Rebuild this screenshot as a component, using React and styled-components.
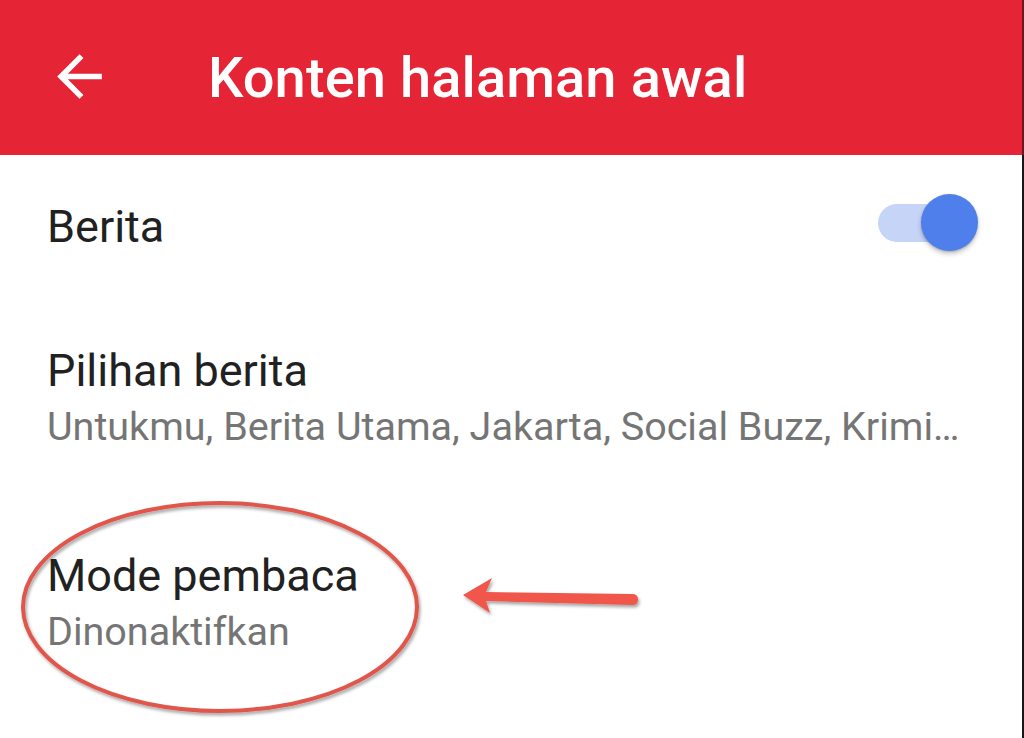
import React from "react";
import styled, { createGlobalStyle } from "styled-components";

const GlobalStyle = createGlobalStyle`
  html, body {
    margin: 0;
    padding: 0;
    background: #ffffff;
  }
  body {
    font-family: Roboto, "Noto Sans", "Liberation Sans", sans-serif;
    -webkit-font-smoothing: antialiased;
  }
`;

const Page = styled.div`
  position: relative;
  width: 1024px;
  height: 738px;
  overflow: hidden;
  background: #ffffff;
  box-shadow: inset -2px 0 0 #161616;
  display: flex;
  flex-direction: column;
`;

const AppBar = styled.header`
  height: 155px;
  flex: 0 0 155px;
  background: #e52535;
  box-shadow: inset -2px 0 0 #6e1620;
  display: flex;
  align-items: center;
  padding-left: 46px;
  box-sizing: border-box;
`;

const BackButton = styled.button`
  width: 67px;
  height: 67px;
  padding: 0;
  border: 0;
  background: transparent;
  display: flex;
  align-items: center;
  justify-content: center;
  margin-top: -3px;
  color: #ffffff;
  svg {
    width: 67px;
    height: 67px;
    display: block;
  }
`;

const Title = styled.h1`
  margin: 0 0 0 95px;
  font-size: 56px;
  font-weight: 500;
  color: #ffffff;
  letter-spacing: 0.1px;
  line-height: 1;
`;

const List = styled.div`
  display: flex;
  flex-direction: column;
`;

const Row = styled.div`
  display: flex;
  align-items: center;
  justify-content: space-between;
  padding: ${(p) => p.$pt}px 46px ${(p) => p.$pb}px 47px;
`;

const TextBlock = styled.div`
  display: flex;
  flex-direction: column;
  min-width: 0;
`;

const ItemTitle = styled.div`
  font-size: 45px;
  line-height: 55px;
  color: #212121;
  font-weight: 400;
`;

const ItemSub = styled.div`
  margin-top: 2px;
  font-size: 39.5px;
  line-height: 53px;
  color: #757575;
  white-space: nowrap;
  overflow: hidden;
  text-overflow: ellipsis;
`;

const Switch = styled.div`
  position: relative;
  width: 100px;
  height: 58px;
  margin: -10px 0 -3px;
  flex: 0 0 auto;
`;

const Track = styled.div`
  position: absolute;
  left: 0;
  top: 10px;
  width: 82px;
  height: 38px;
  border-radius: 19px;
  background: #c6d4f8;
`;

const Thumb = styled.div`
  position: absolute;
  right: 0;
  top: 0;
  width: 57px;
  height: 57px;
  border-radius: 50%;
  background: #4f7fea;
  box-shadow: 0 3px 5px rgba(0, 0, 0, 0.22), 0 1px 2px rgba(0, 0, 0, 0.15);
`;

const Annotation = styled.svg`
  position: absolute;
  left: 0;
  top: 0;
  width: 1024px;
  height: 738px;
  pointer-events: none;
`;

export default function App() {
  return (
    <>
      <GlobalStyle />
      <Page>
        <AppBar>
          <BackButton aria-label="Kembali">
            <svg viewBox="0 0 24 24" fill="currentColor">
              <path d="M20 11H7.83l5.59-5.59L12 4l-8 8 8 8 1.41-1.41L7.83 13H20v-2z" />
            </svg>
          </BackButton>
          <Title>Konten halaman awal</Title>
        </AppBar>
        <List>
          <Row $pt={44} $pb={44}>
            <TextBlock>
              <ItemTitle>Berita</ItemTitle>
            </TextBlock>
            <Switch>
              <Track />
              <Thumb />
            </Switch>
          </Row>
          <Row $pt={45} $pb={49}>
            <TextBlock>
              <ItemTitle>Pilihan berita</ItemTitle>
              <ItemSub>Untukmu, Berita Utama, Jakarta, Social Buzz, Krimi…</ItemSub>
            </TextBlock>
          </Row>
          <Row $pt={46} $pb={40}>
            <TextBlock>
              <ItemTitle>Mode pembaca</ItemTitle>
              <ItemSub>Dinonaktifkan</ItemSub>
            </TextBlock>
          </Row>
        </List>
        <Annotation viewBox="0 0 1024 738">
          <defs>
            <filter id="sh" x="-10%" y="-10%" width="120%" height="130%">
              <feDropShadow dx="1.5" dy="2.5" stdDeviation="1.5" floodColor="#000" floodOpacity="0.35" />
            </filter>
          </defs>
          <ellipse
            cx="220"
            cy="607"
            rx="197"
            ry="104"
            fill="none"
            stroke="#e0564c"
            strokeWidth="4"
            filter="url(#sh)"
          />
          <g filter="url(#sh)" fill="#f0564a">
            <path d="M463 595 L492 578 L486 592 L632 594 Q638 594 638 599.5 Q638 605 632 605 L486 601 L490 613 Z" />
          </g>
        </Annotation>
      </Page>
    </>
  );
}
